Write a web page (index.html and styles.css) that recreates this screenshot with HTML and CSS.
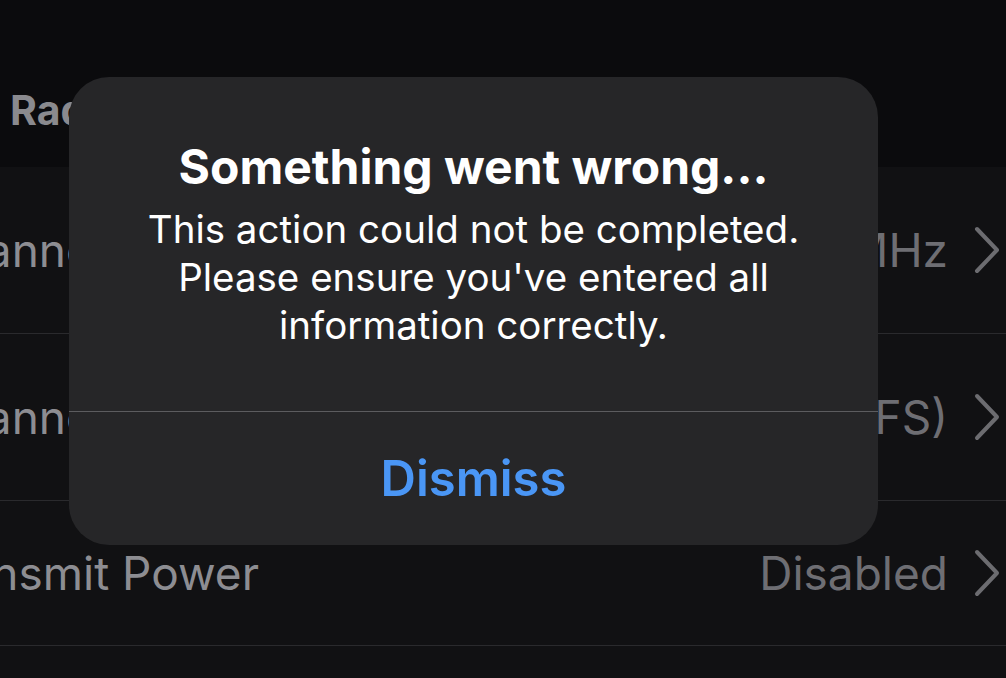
FILE: index.html
```html
<!DOCTYPE html>
<html lang="en">

<head>
  <meta charset="UTF-8">
  <meta name="viewport" content="width=device-width, initial-scale=1.0">
  <title>Radio Settings</title>
  <link rel="stylesheet" href="styles.css">
</head>

<body>
  <div class="screen">
    <div class="header">
      <p>Radio</p>
    </div>
    <div class="list">
      <div class="row">
        <span class="label">Channel Width</span>
        <span class="value">80 MHz</span>
        <svg class="chev" width="26" height="48" viewBox="0 0 26 48"><path d="M3 3 L23 24 L3 45" fill="none" stroke="#6c6c70" stroke-width="4" stroke-linecap="round" stroke-linejoin="round"/></svg>
      </div>
      <div class="row">
        <span class="label">Channel</span>
        <span class="value">Auto (DFS)</span>
        <svg class="chev" width="26" height="48" viewBox="0 0 26 48"><path d="M3 3 L23 24 L3 45" fill="none" stroke="#6c6c70" stroke-width="4" stroke-linecap="round" stroke-linejoin="round"/></svg>
      </div>
      <div class="row short">
        <span class="label far">Transmit Power</span>
        <span class="value">Disabled</span>
        <svg class="chev" width="26" height="48" viewBox="0 0 26 48"><path d="M3 3 L23 24 L3 45" fill="none" stroke="#6c6c70" stroke-width="4" stroke-linecap="round" stroke-linejoin="round"/></svg>
      </div>
    </div>

    <!-- alert overlay -->
    <div class="alert">
      <div class="alert-body">
        <h1>Something went wrong...</h1>
        <p>This action could not be completed.<br>Please ensure you've entered all<br>information correctly.</p>
      </div>
      <div class="alert-btn">Dismiss</div>
    </div>
  </div>
</body>

</html>
```

FILE: styles.css
```css
*{
    margin: 0;
    padding: 0;
  }
  body{
    background-color: #0b0b0d;
    font-family: Inter, "Noto Sans", sans-serif;
    overflow: hidden;
  }
  .screen{
    width: 1006px;
    height: 678px;
    position: relative;
    overflow: hidden;
  }
  .header{
    height: 167px;
    display: flex;
    align-items: flex-end;
    padding-left: 10px;
  }
  .header p{
    color: #8a8a8e;
    font-size: 41px;
    font-weight: 700;
    line-height: 1;
    margin-bottom: 36px;
  }
  .list{
    background-color: #111113;
    height: 511px;
  }
  .row{
    height: 166px;
    border-bottom: 1px solid #2a2a2d;
    display: flex;
    align-items: center;
    font-size: 46px;
    color: #8d8d92;
    padding-right: 6px;
  }
  .row.short{
    height: 144px;
  }
  .label{
    margin-left: -75px;
    flex: 1;
    white-space: nowrap;
  }
  .label.far{
    margin-left: -79px;
  }
  .value{
    color: #6e6e73;
    margin-right: 26px;
  }
  .alert{
    position: absolute;
    left: 69px;
    top: 77px;
    width: 809px;
    height: 468px;
    background-color: #262628;
    border-radius: 40px;
    display: flex;
    flex-direction: column;
    color: #fff;
    text-align: center;
  }
  .alert-body{
    height: 335px;
    border-bottom: 1px solid #5c5c5f;
    padding-top: 62px;
    box-sizing: border-box;
  }
  .alert-body h1{
    font-size: 48px;
    font-weight: 700;
    line-height: 56px;
    margin-bottom: 10px;
  }
  .alert-body p{
    font-size: 38.5px;
    line-height: 48px;
  }
  .alert-btn{
    flex: 1;
    display: flex;
    align-items: center;
    justify-content: center;
    color: #4a96f5;
    font-size: 49px;
    font-weight: 600;
  }
```
